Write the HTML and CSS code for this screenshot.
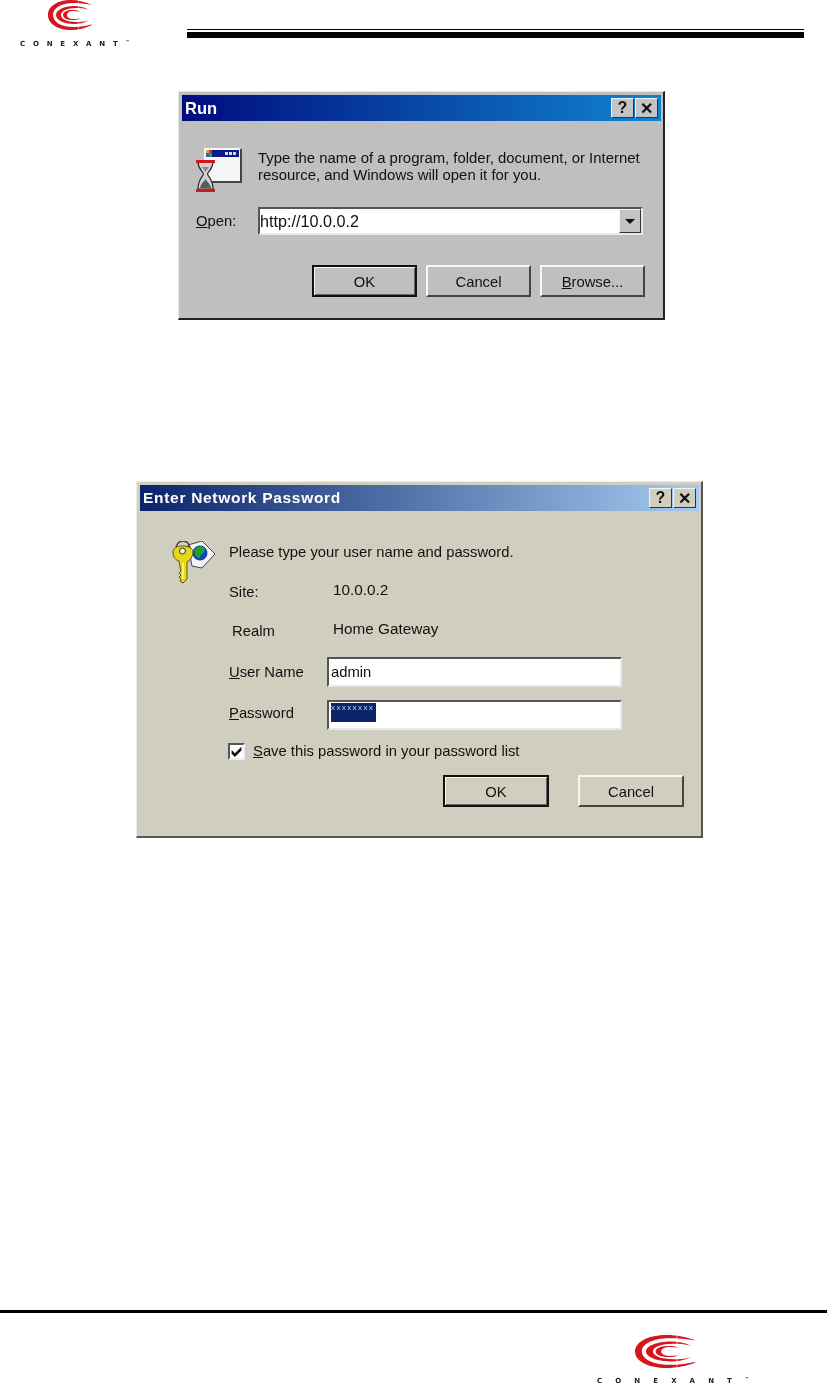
FILE: index.html
```html
<!DOCTYPE html>
<html lang="en">
<head>
    <meta charset="UTF-8">
    <meta name="viewport" content="width=device-width, initial-scale=1.0">
    <title>Conexant - Home Gateway login</title>
    <link rel="stylesheet" href="styles.css">
</head>
<body>
    <svg class="defs" width="0" height="0">
        <symbol id="cnx-mark" viewBox="0 0 45 30" preserveAspectRatio="none">
            <path d="M44 5C38 2 30 0 23 0 10 0 0 6 0 15c0 9 10 15 23 15 7 0 15-2 21-5l-1-.5c-6 2-13 2.500-18 2.500-12 0-20-5-20-12S13 3 25 3c5 0 12 .5 19 2z"/>
            <path d="M41 10c-5-3-10-4-15-4C16 6 8 10 8 15s8 9 18 9c5 0 10-1 15-4-5 2-9 2-13 2-9 0-15-3-15-7s6-7 15-7c4 0 8 0 13 2z"/>
            <path d="M32 12c-2-2-5-2-8-2-5 0-9 2-9 5s4 5 9 5c3 0 6 0 8-2-3 1-5 1-7 1-4 0-6-2-6-4s2-4 6-4c2 0 4 0 7 1z"/>
            <rect class="mark-cut" x="30" y="0" width="1" height="30"/>
        </symbol>
    </svg>

    <div class="page">
        <header class="page-head">
            <div class="logo logo-top">
                <svg class="mark" aria-hidden="true"><use href="#cnx-mark"/></svg>
                <div class="wordmark">CONEXANT<sup>™</sup></div>
            </div>
            <div class="head-rule"></div>
        </header>

        <main class="content">
            <section class="dialog dialog-run">
                <div class="titlebar">
                    <span class="title">Run</span>
                    <span class="caps"><span class="cap">?</span><span class="cap">✕</span></span>
                </div>
                <div class="run-body">
                    <div class="run-intro">
                        <svg class="icon-run" viewBox="0 0 46 46" aria-hidden="true">
                            <rect x="9" y="2" width="37" height="34" fill="#444"/>
                            <rect x="8" y="1" width="36" height="33" fill="#f6f6f6"/>
                            <rect x="10" y="3" width="33" height="7" fill="#0a1a8c"/>
                            <rect x="10" y="3" width="3" height="3" fill="#d8b020"/>
                            <rect x="13" y="3" width="3" height="3" fill="#c83020"/>
                            <rect x="10" y="6" width="3" height="4" fill="#2060d0"/>
                            <rect x="13" y="6" width="3" height="4" fill="#30a040"/>
                            <rect x="29" y="5" width="3" height="3" fill="#ddd"/>
                            <rect x="33" y="5" width="3" height="3" fill="#ddd"/>
                            <rect x="37" y="5" width="3" height="3" fill="#ddd"/>
                            <path d="M2 15h15c0 7-5 9-5.500 12 .5 3 5.500 5 5.500 15H2c0-10 5-12 5.500-15C7 24 2 22 2 15z" fill="#d2d2d2" stroke="#2a2a2a" stroke-width="1.200"/>
                            <path d="M4 41c1-5 4-6 5.500-9 1.500 3 4.500 4 5.500 9z" fill="#5c5c5c"/>
                            <path d="M6 20h7l-3.500 5z" fill="#8a8a8a"/>
                            <rect x="0" y="13" width="19" height="3" fill="#d01818"/>
                            <rect x="0" y="42" width="19" height="3" fill="#d01818"/>
                        </svg>
                        <p class="run-text">Type the name of a program, folder, document, or Internet<br>resource, and Windows will open it for you.</p>
                    </div>
                    <div class="run-open">
                        <label class="run-label"><u>O</u>pen:</label>
                        <div class="field combo">
                            <span class="field-text">http://10.0.0.2</span>
                            <span class="combo-btn"><i class="arrow"></i></span>
                        </div>
                    </div>
                    <div class="run-buttons">
                        <button class="btn btn-default">OK</button>
                        <button class="btn">Cancel</button>
                        <button class="btn"><u>B</u>rowse...</button>
                    </div>
                </div>
            </section>

            <section class="dialog dialog-pass">
                <div class="titlebar">
                    <span class="title">Enter Network Password</span>
                    <span class="caps"><span class="cap">?</span><span class="cap">✕</span></span>
                </div>
                <div class="pass-body">
                    <svg class="icon-key" viewBox="0 0 44 46" aria-hidden="true">
                        <path d="M16 4l14-4 13 13-13 14-10-2z" fill="#f4f4f4" stroke="#444"/>
                        <circle cx="28" cy="12" r="7.500" fill="#1048b0"/>
                        <path d="M23 8c3-3 7-3 9-1s0 5-2 6-2 5-4 4-5-7-3-9z" fill="#20a030"/>
                        <path d="M4 8C4 2 8 0 11 0s7 2 7 8" fill="none" stroke="#444" stroke-width="1.600"/>
                        <path d="M1 11c0-4 4-6 9.500-6S21 7 21 11c0 4-3 9-6 10v17l-4 4-3-2 1-2-2-2 2-2-2-2 2-2-2-10C3 19 1 15 1 11z" fill="#e6d818" stroke="#5a5210"/>
                        <circle cx="10.500" cy="10" r="3" fill="#f4f4d8" stroke="#333"/>
                        <path d="M11 22v16" stroke="#fff8a0" stroke-width="1.500"/>
                    </svg>
                    <div class="pass-main">
                        <div class="row row-intro">Please type your user name and password.</div>
                        <div class="row row-site"><span class="row-label">Site:</span><span class="row-value">10.0.0.2</span></div>
                        <div class="row row-realm"><span class="row-label label-realm">Realm</span><span class="row-value">Home Gateway</span></div>
                        <div class="row row-user">
                            <label class="row-label"><u>U</u>ser Name</label>
                            <div class="field field-pass"><span class="field-text">admin</span></div>
                        </div>
                        <div class="row row-pass">
                            <label class="row-label"><u>P</u>assword</label>
                            <div class="field field-pass"><span class="selected">xxxxxxxx</span></div>
                        </div>
                        <div class="row row-save">
                            <span class="check"><svg viewBox="0 0 12 12" aria-hidden="true"><path d="M1.500 4.500l3 3 6-6v3.500l-6 6-3-3z" fill="#111"/></svg></span>
                            <span><u>S</u>ave this password in your password list</span>
                        </div>
                        <div class="pass-buttons">
                            <button class="btn btn-default">OK</button>
                            <button class="btn">Cancel</button>
                        </div>
                    </div>
                </div>
            </section>
        </main>

        <footer class="page-foot">
            <div class="logo logo-bottom">
                <svg class="mark" aria-hidden="true"><use href="#cnx-mark"/></svg>
                <div class="wordmark">CONEXANT<sup>™</sup></div>
            </div>
        </footer>
    </div>
</body>
</html>
```

FILE: styles.css
```css
* {
    box-sizing: border-box;
}
html, body {
    margin: 0;
    padding: 0;
}
body {
    font-family: "Liberation Sans", Arial, sans-serif;
    background: white;
    color: #111;
}
.defs {
    display: block;
    height: 0;
}
.page {
    width: 827px;
    height: 1387px;
    overflow: hidden;
    display: flex;
    flex-direction: column;
}

/* header */
.page-head {
    height: 91px;
    display: flex;
    align-items: flex-start;
}
.logo {
    display: flex;
    flex-direction: column;
    filter: blur(0.4px);
}
.logo-top {
    width: 187px;
    padding-left: 20px;
}
.mark {
    display: block;
    fill: #d8151c;
}
.mark-cut {
    fill: white;
    opacity: 0.4;
}
.logo-top .mark {
    width: 45px;
    height: 30px;
    margin-left: 28px;
}
.wordmark {
    font-family: "DejaVu Sans", sans-serif;
    font-weight: bold;
    white-space: nowrap;
    color: #222;
}
.wordmark sup {
    font-size: 4px;
    letter-spacing: 0;
    vertical-align: 3px;
    line-height: 0;
}
.logo-top .wordmark {
    font-size: 7px;
    line-height: 8px;
    letter-spacing: 7.800px;
    margin-top: 10px;
}
.head-rule {
    width: 617px;
    height: 9px;
    margin-top: 29px;
    border-top: 1px solid black;
    border-bottom: 6px solid black;
}

/* dialogs */
.content {
    flex: 1;
    display: flex;
    flex-direction: column;
    align-items: flex-start;
}
.dialog {
    padding: 3px 2px 2px 3px;
    border: solid;
    border-width: 1px 2px 2px 1px;
    filter: blur(0.5px);
    font-size: 14.800px;
}
.titlebar {
    height: 26px;
    display: flex;
    justify-content: space-between;
    align-items: center;
    padding: 0 3px;
    color: white;
}
.title {
    font-weight: bold;
    font-size: 16.500px;
}
.caps {
    display: flex;
    gap: 1px;
}
.cap {
    width: 23px;
    height: 20px;
    display: flex;
    align-items: center;
    justify-content: center;
    color: #111;
    font-weight: bold;
    font-size: 16px;
    border: 1px solid;
    border-color: #f4f4f4 #333 #333 #f4f4f4;
}
.field {
    background: white;
    border: 2px solid;
    border-color: #555 #e8e8e8 #e8e8e8 #555;
    display: flex;
    align-items: center;
}
.field-text {
    padding-left: 2px;
}
.btn {
    width: 105px;
    height: 32px;
    padding: 1px 0 0;
    font: inherit;
    color: #111;
    border: 2px solid;
    border-color: #f6f6f6 #444 #444 #f6f6f6;
    background: inherit;
}
.btn-default {
    border: 2px solid #111;
    box-shadow: inset 1px 1px 0 #f6f6f6, inset -1px -1px 0 #666;
}

/* run dialog */
.dialog-run {
    width: 487px;
    height: 229px;
    margin-left: 178px;
    background: #bfbfbf;
    border-color: #e6e6e6 #222 #222 #e6e6e6;
}
.dialog-run .titlebar {
    background: linear-gradient(to right, #000c7e, #1084d0);
}
.dialog-run .cap {
    background: #c4c4c4;
}
.run-body {
    display: flex;
    flex-direction: column;
    padding: 26px 17px 0 14px;
}
.run-intro {
    display: flex;
    gap: 16px;
}
.icon-run {
    width: 46px;
    height: 46px;
    flex: none;
}
.run-text {
    margin: 3px 0 0;
    font-size: 14.900px;
    line-height: 17px;
}
.run-open {
    display: flex;
    align-items: center;
    margin-top: 14px;
}
.run-label {
    width: 62px;
}
.combo {
    width: 385px;
    height: 28px;
    justify-content: space-between;
    font-size: 16.200px;
}
.combo .field-text {
    padding-left: 0;
}
.combo-btn {
    width: 22px;
    height: 24px;
    background: #c4c4c4;
    border: 1px solid;
    border-color: #f4f4f4 #333 #333 #f4f4f4;
    display: flex;
    align-items: center;
    justify-content: center;
}
.arrow {
    border: 5px solid transparent;
    border-top: 5px solid #111;
    border-bottom: 0;
}
.run-buttons {
    display: flex;
    justify-content: flex-end;
    gap: 9px;
    margin-top: 30px;
    margin-right: -1px;
}

/* password dialog */
.dialog-pass {
    width: 567px;
    height: 357px;
    margin-left: 136px;
    margin-top: 161px;
    background: #d0cebf;
    border-color: #efeee6 #555 #555 #efeee6;
}
.dialog-pass .titlebar {
    background: linear-gradient(to right, #0a246a, #a6caf0);
}
.dialog-pass .title {
    font-size: 15.500px;
    letter-spacing: 0.7px;
}
.dialog-pass .cap {
    background: #d0cebf;
}
.pass-body {
    display: flex;
    padding: 30px 15px 0 32px;
}
.icon-key {
    width: 44px;
    height: 46px;
    flex: none;
}
.pass-main {
    flex: 1;
    margin-left: 13px;
    display: flex;
    flex-direction: column;
}
.row {
    display: flex;
    align-items: center;
}
.row-intro {
    height: 20px;
    padding-top: 1px;
}
.row-site {
    height: 20px;
    margin-top: 20px;
}
.row-realm {
    height: 20px;
    margin-top: 19px;
}
.row-user {
    height: 30px;
    margin-top: 17px;
}
.row-pass {
    height: 30px;
    margin-top: 13px;
}
.row-save {
    height: 20px;
    margin-top: 11px;
}
.row-label {
    width: 98px;
    flex: none;
}
.row-site .row-label,
.row-realm .row-label {
    width: 104px;
    margin-top: 2px;
}
.label-realm {
    padding-left: 3px;
}
.row-site .row-value,
.row-realm .row-value {
    margin-top: -2px;
    font-size: 15.300px;
}
.row-user .row-label {
    margin-top: -1px;
}
.row-pass .row-label {
    margin-top: -4px;
}
.field-pass {
    width: 295px;
    height: 30px;
    align-items: flex-start;
}
.row-user .field-pass {
    align-items: center;
}
.selected {
    display: block;
    width: 45px;
    height: 19px;
    margin: 1px 0 0 2px;
    background: #0a246a;
    color: #c8d4e8;
    font-size: 8px;
    line-height: 10px;
    letter-spacing: 1.400px;
}
.check {
    width: 17px;
    height: 17px;
    margin-left: -1px;
    margin-right: 8px;
    background: white;
    border: 2px solid;
    border-color: #555 #eee #eee #555;
}
.check svg {
    display: block;
    width: 13px;
    height: 13px;
}
.pass-buttons {
    display: flex;
    justify-content: flex-end;
    gap: 29px;
    margin-top: 14px;
}
.pass-buttons .btn {
    width: 106px;
}

/* footer */
.page-foot {
    height: 77px;
    border-top: 3px solid black;
    padding-left: 597px;
}
.logo-bottom {
    width: 180px;
}
.logo-bottom .mark {
    width: 62px;
    height: 33px;
    margin: 22px 0 0 38px;
    filter: blur(0.4px);
}
.logo-bottom .wordmark {
    font-size: 7px;
    line-height: 8px;
    letter-spacing: 13.100px;
    margin-top: 9px;
    filter: blur(0.5px);
}
```
